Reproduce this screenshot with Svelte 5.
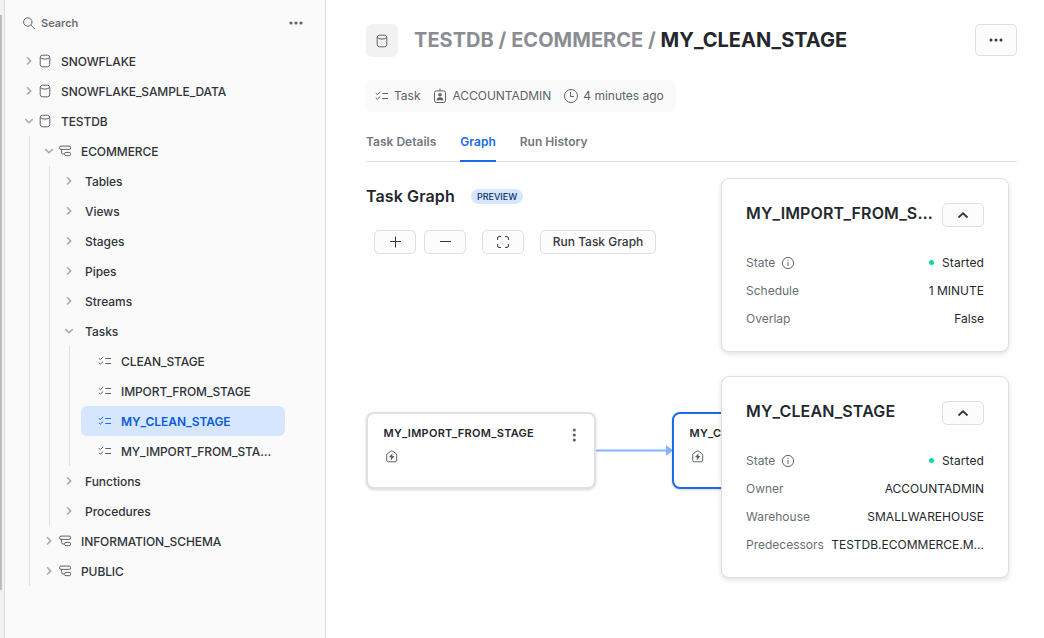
<script>
  const task = (name, selected = false) => ({ name, kind: 'task', selected });
  const folder = (name, children) => ({ name, kind: 'folder', children });

  const tree = [
    { name: 'SNOWFLAKE', kind: 'db' },
    { name: 'SNOWFLAKE_SAMPLE_DATA', kind: 'db' },
    {
      name: 'TESTDB',
      kind: 'db',
      children: [
        {
          name: 'ECOMMERCE',
          kind: 'schema',
          children: [
            folder('Tables'),
            folder('Views'),
            folder('Stages'),
            folder('Pipes'),
            folder('Streams'),
            folder('Tasks', [
              task('CLEAN_STAGE'),
              task('IMPORT_FROM_STAGE'),
              task('MY_CLEAN_STAGE', true),
              task('MY_IMPORT_FROM_STA…')
            ]),
            folder('Functions'),
            folder('Procedures')
          ]
        },
        { name: 'INFORMATION_SCHEMA', kind: 'schema' },
        { name: 'PUBLIC', kind: 'schema' }
      ]
    }
  ];

  const panels = [
    {
      title: 'MY_IMPORT_FROM_S…',
      rows: [['Schedule', '1 MINUTE'], ['Overlap', 'False']]
    },
    {
      title: 'MY_CLEAN_STAGE',
      rows: [
        ['Owner', 'ACCOUNTADMIN'],
        ['Warehouse', 'SMALLWAREHOUSE'],
        ['Predecessors', 'TESTDB.ECOMMERCE.M...']
      ]
    }
  ];
</script>

{#snippet dbIcon()}
  <svg class="icon" width="12" height="14" viewBox="0 0 12 14">
    <rect x="1.2" y="1.2" width="9.6" height="11.6" rx="2.4" />
    <path d="M1.400 3.400q1 1.700 4.600 1.700t4.600-1.700" />
  </svg>
{/snippet}

{#snippet schemaIcon()}
  <svg class="icon" width="13" height="12" viewBox="0 0 13 12">
    <rect x=".6" y="1.1" width="11" height="3.3" rx="1.4" />
    <rect x="5.6" y="7.4" width="6" height="3.3" rx="1.4" />
    <path d="M2.6 4.5v3.1q0 1.4 1.4 1.4h1.5" />
  </svg>
{/snippet}

{#snippet taskIcon()}
  <svg class="icon" width="14" height="12" viewBox="0 0 14 12">
    <path d="M.8 3.2l1.5 1.4L5.2 1.9M.8 7.8l1.5 1.4L5.2 6.5M7.3 3.5H13M7.3 8.5H13" />
  </svg>
{/snippet}

{#snippet warehouseIcon()}
  <svg class="icon" width="12" height="13" viewBox="0 0 12 13">
    <path d="M.7 5.2Q.7 4 1.700 3.300L4.900 1.200q.8-.5 1.600 0L9.700 3.300q1 .7 1 1.900v5q0 1.600-1.600 1.600H2.300Q.7 11.800.7 10.200z" />
    <path class="solid" d="M6.400 3.200L2.900 7.300h2L4.800 10.400 8.500 6.100H6.400z" />
  </svg>
{/snippet}

{#snippet nodes(items)}
  <ul>
    {#each items as item}
      <li>
        <div class="row {item.kind}" class:selected={item.selected}>
          {#if item.kind !== 'task'}
            <span class="twist">
              <svg width="10" height="10" viewBox="0 0 10 10">
                <path d={item.children ? 'M1.300 3.100L5 6.700l3.700-3.600' : 'M3.100 1.300L6.700 4.900 3.100 8.500'} />
              </svg>
            </span>
          {/if}
          {#if item.kind === 'db'}{@render dbIcon()}{/if}
          {#if item.kind === 'schema'}{@render schemaIcon()}{/if}
          {#if item.kind === 'task'}{@render taskIcon()}{/if}
          <span class="label">{item.name}</span>
        </div>
        {#if item.children}{@render nodes(item.children)}{/if}
      </li>
    {/each}
  </ul>
{/snippet}

<div class="app">
  <div class="gutter"><div class="thumb"></div></div>

  <aside>
    <div class="search">
      <svg class="icon" width="13" height="13" viewBox="0 0 13 13">
        <circle cx="4.800" cy="5" r="4.200" />
        <path d="M7.800 8l4 4" />
      </svg>
      <span>Search</span>
      <svg class="dots" width="14" height="4" viewBox="0 0 14 4">
        <circle cx="2" cy="2" r="1.600" /><circle cx="7" cy="2" r="1.600" /><circle cx="12" cy="2" r="1.600" />
      </svg>
    </div>
    <nav>{@render nodes(tree)}</nav>
  </aside>

  <main>
    <header>
      <div class="badge">{@render dbIcon()}</div>
      <h1><span>{'TESTDB / ECOMMERCE / '}</span>MY_CLEAN_STAGE</h1>
      <button class="more" aria-label="More">
        <svg class="dots" width="14" height="4" viewBox="0 0 14 4">
          <circle cx="2" cy="2" r="1.500" /><circle cx="7" cy="2" r="1.500" /><circle cx="12" cy="2" r="1.500" />
        </svg>
      </button>
    </header>

    <div class="meta">
      {@render taskIcon()}
      <span class="m1">Task</span>
      <svg class="icon" width="14" height="16" viewBox="0 0 14 16">
        <rect x="1.500" y="2.900" width="11" height="11.600" rx="1.800" />
        <path d="M7 .5v2.400" />
        <circle class="solid" cx="7" cy="6.700" r="1.800" />
        <path class="solid" d="M3.600 12.200q0-2.900 3.400-2.900t3.400 2.900z" />
      </svg>
      <span class="m2">ACCOUNTADMIN</span>
      <svg class="icon" width="16" height="16" viewBox="0 0 16 16">
        <circle cx="8" cy="8" r="6.500" />
        <path d="M7.500 4v4.500H11" />
      </svg>
      <span class="m3">4 minutes ago</span>
    </div>

    <div class="tabs">
      <span>Task Details</span>
      <span class="active">Graph</span>
      <span>Run History</span>
    </div>

    <section class="canvas">
      <div class="heading">
        <h2>Task Graph</h2>
        <span class="preview">PREVIEW</span>
      </div>
      <div class="tools">
        <button aria-label="Zoom in">
          <svg width="12" height="12" viewBox="0 0 12 12"><path d="M6.500 .5v11M1 5.500h11" /></svg>
        </button>
        <button aria-label="Zoom out">
          <svg width="12" height="12" viewBox="0 0 12 12"><path d="M1 5.500h11" /></svg>
        </button>
        <button class="fit" aria-label="Fit">
          <svg width="12" height="12" viewBox="0 0 12 12">
            <path d="M.6 4V2Q.6.6 2 .6h2M8 .6h2q1.400 0 1.400 1.400v2M11.400 8v2q0 1.400-1.400 1.400H8M4 11.400H2Q.6 11.400.6 10V8" />
          </svg>
        </button>
        <button class="run">Run Task Graph</button>
      </div>

      <div class="node first">
        <div class="name">MY_IMPORT_FROM_STAGE</div>
        {@render warehouseIcon()}
        <svg class="kebab" width="4" height="14" viewBox="0 0 4 14">
          <circle cx="2.300" cy="2" r="1.600" /><circle cx="2.300" cy="7" r="1.600" /><circle cx="2.300" cy="12" r="1.600" />
        </svg>
      </div>
      <svg class="edge" width="77" height="12" viewBox="0 0 77 12">
        <path class="wire" d="M0 6.500h72" />
        <path class="tip" d="M70 1l7 5.500-7 5.500z" />
      </svg>
      <div class="node second">
        <div class="name">MY_CLEAN_STAGE</div>
        {@render warehouseIcon()}
      </div>

      <div class="panels">
        {#each panels as panel}
          <article>
            <div class="top">
              <h3>{panel.title}</h3>
              <button aria-label="Collapse">
                <svg width="12" height="8" viewBox="0 0 12 8"><path class="thick" d="M1.500 6.500L6 2.300l4.500 4.200" /></svg>
              </button>
            </div>
            <div class="field">
              <span class="key">State
                <svg class="icon" width="14" height="14" viewBox="0 0 14 14">
                  <circle cx="7" cy="7" r="5.600" />
                  <path d="M7 6v4M7 3.800v1.200" />
                </svg>
              </span>
              <span class="value state"><i></i>Started</span>
            </div>
            {#each panel.rows as [key, value]}
              <div class="field">
                <span class="key">{key}</span>
                <span class="value">{value}</span>
              </div>
            {/each}
          </article>
        {/each}
      </div>
    </section>
  </main>
</div>

<style>
  :global(body) {
    background: #fff;
  }
  * {
    box-sizing: border-box;
  }
  .app {
    display: flex;
    height: 638px;
    overflow: hidden;
    font: 400 13px/20px Inter, sans-serif;
    color: #24282d;
  }
  svg {
    display: block;
    flex: none;
    fill: none;
    stroke: #34383c;
  }
  .icon {
    stroke: #5d6369;
  }
  .solid {
    fill: #5d6369;
    stroke: none;
  }
  .dots,
  .kebab {
    fill: #5d6369;
    stroke: none;
  }
  .gutter {
    width: 5px;
    flex: none;
    background: #f2f2f2;
    border-right: 1px solid #dcdcdc;
  }
  .thumb {
    width: 2px;
    height: 575px;
    margin-top: 15px;
    background: #bdbdbd;
  }
  aside {
    width: 321px;
    flex: none;
    background: #fafafa;
    border-right: 1px solid #dedfe0;
  }
  .search {
    display: flex;
    align-items: center;
    height: 46px;
    padding: 0 22px 0 18px;
    font-size: 11px;
    font-weight: 600;
    color: #6a6f75;
  }
  .search span {
    margin-left: 5px;
  }
  .search .dots {
    margin-left: auto;
  }
  ul {
    list-style: none;
    margin: 0;
    padding: 0;
  }
  nav > ul {
    padding: 0 40px 0 14px;
  }
  li ul {
    margin-left: 10px;
    padding-left: 9px;
    border-left: 1px solid #dedfe0;
  }
  .row {
    display: flex;
    align-items: center;
    height: 30px;
    font-size: 12px;
    font-weight: 500;
    letter-spacing: -0.1px;
    color: #303438;
  }
  .row.folder {
    letter-spacing: -0.03px;
  }
  .twist {
    display: flex;
    justify-content: center;
    width: 20px;
  }
  .twist svg {
    stroke: #a6a9ac;
    stroke-width: 1.500;
  }
  .label {
    flex: 1;
    min-width: 0;
    padding-top: 2px;
    white-space: nowrap;
  }
  .db .label {
    margin-left: 10px;
  }
  .schema .label {
    margin-left: 9px;
  }
  .folder .label {
    margin-left: 6px;
  }
  .task {
    margin-left: 2px;
    padding: 0 15px 0 17px;
    border-radius: 6px;
  }
  .task .label {
    margin-left: 9px;
  }
  .row.selected {
    background: #d6e6ff;
    color: #0b5bd9;
    font-weight: 600;
    letter-spacing: -0.07px;
  }
  .selected .icon {
    stroke: #1a6ce7;
  }
  main {
    flex: 1;
    min-width: 0;
    padding: 24px 27px 0 40px;
  }
  header {
    display: flex;
    height: 33px;
  }
  .badge {
    display: flex;
    align-items: center;
    justify-content: center;
    width: 32px;
    height: 33px;
    border-radius: 6px;
    background: #f2f2f2;
  }
  h1,
  h2,
  h3 {
    margin: 0;
    white-space: nowrap;
  }
  h1 {
    margin-left: 16px;
    font-size: 20px;
    line-height: 33px;
    font-weight: 700;
    letter-spacing: 0.03px;
  }
  h1 span {
    color: #8a8e93;
    white-space: pre;
  }
  button {
    display: flex;
    align-items: center;
    justify-content: center;
    width: 42px;
    height: 24px;
    padding: 0;
    border: 1px solid #dedfe0;
    border-radius: 5px;
    background: #fcfcfc;
    font: 500 12px/20px Inter, sans-serif;
    color: #34383c;
  }
  .more {
    height: 32px;
    margin-left: auto;
  }
  .more .dots {
    fill: #34383c;
  }
  .meta {
    display: flex;
    align-items: center;
    width: 310px;
    height: 32px;
    margin-top: 23px;
    padding-left: 9px;
    border-radius: 6px;
    background: #fafafa;
    font-size: 12px;
    color: #5d6369;
    white-space: nowrap;
  }
  .m1 {
    margin: 0 12px 0 5px;
  }
  .m2 {
    margin: 0 12px 0 6px;
    letter-spacing: -0.05px;
  }
  .m3 {
    margin-left: 4px;
  }
  .tabs {
    display: flex;
    gap: 24px;
    height: 40px;
    margin-top: 10px;
    border-bottom: 1px solid #dedfe0;
    font-size: 12px;
    font-weight: 600;
    line-height: 40px;
    letter-spacing: 0.01px;
    color: #73787e;
  }
  .tabs span {
    height: 40px;
  }
  .tabs .active {
    color: #1a6ce7;
    border-bottom: 2px solid #1a6ce7;
  }
  .canvas {
    position: relative;
    height: 476px;
    padding-top: 24px;
  }
  .heading {
    display: flex;
    align-items: center;
    height: 20px;
  }
  h2 {
    font-size: 16px;
    font-weight: 600;
    letter-spacing: 0.12px;
  }
  .preview {
    height: 15px;
    margin-left: 16px;
    padding: 0 6px;
    border-radius: 8px;
    background: #d6e6ff;
    color: #11336b;
    font-size: 9px;
    line-height: 15px;
    font-weight: 500;
  }
  .tools {
    display: flex;
    gap: 8px;
    padding: 24px 0 0 8px;
  }
  .fit {
    margin-left: 8px;
  }
  .run {
    width: 116px;
    margin-left: 8px;
  }
  .node {
    position: absolute;
    top: 250px;
    width: 230px;
    height: 77px;
    padding: 10px 15.5px;
    border: 2px solid #e0e1e2;
    border-radius: 8px;
    background: #fff;
    box-shadow: 0 1px 3px rgba(0, 0, 0, 0.16);
  }
  .first {
    left: 0;
  }
  .second {
    left: 306px;
    border-color: #1a6ce7;
  }
  .name {
    margin-bottom: 8px;
    font-size: 11px;
    line-height: 18px;
    font-weight: 600;
    letter-spacing: 0.27px;
  }
  .node > .icon {
    margin-left: 2.5px;
  }
  .kebab {
    position: absolute;
    right: 18px;
    top: 14px;
  }
  .edge {
    position: absolute;
    left: 230px;
    top: 282px;
  }
  .wire {
    stroke: #85b3ff;
    stroke-width: 2;
  }
  .tip {
    fill: #85b3ff;
    stroke: none;
  }
  .panels {
    position: absolute;
    top: 16px;
    right: 8px;
    display: flex;
    flex-direction: column;
    gap: 24px;
    width: 288px;
  }
  article {
    padding: 24px 24px 18px;
    border: 1px solid #dedfe0;
    border-radius: 8px;
    background: #fff;
    box-shadow: 0 2px 5px rgba(0, 0, 0, 0.12);
  }
  .top {
    display: flex;
    justify-content: space-between;
    height: 46px;
  }
  h3 {
    height: 20px;
    font-size: 16px;
    font-weight: 600;
    letter-spacing: 0.14px;
  }
  .top button {
    flex: none;
  }
  .thick {
    stroke-width: 1.800;
  }
  .field {
    display: flex;
    justify-content: space-between;
    height: 28px;
    font-size: 12px;
    line-height: 28px;
  }
  .key {
    display: flex;
    align-items: center;
    gap: 6px;
    color: #6a6f75;
  }
  .value {
    white-space: nowrap;
  }
  .state {
    letter-spacing: 0.1px;
  }
  .state i {
    display: inline-block;
    width: 5px;
    height: 5px;
    margin: 0 8px 2px 0;
    border-radius: 50%;
    background: #12d6a0;
  }
</style>
